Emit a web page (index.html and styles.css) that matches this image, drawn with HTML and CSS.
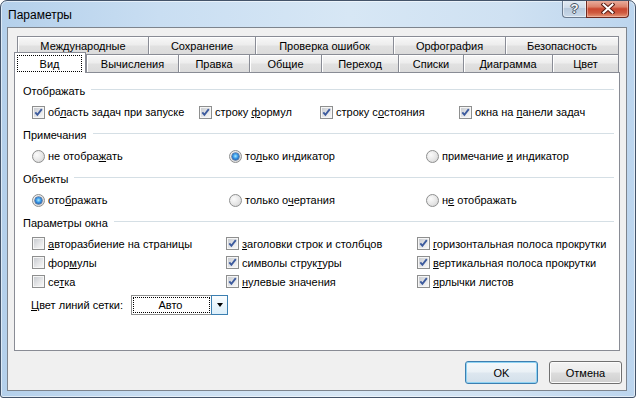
FILE: index.html
```html
<!DOCTYPE html>
<html lang="ru">
<head>
<meta charset="utf-8">
<title>Параметры</title>
<link rel="stylesheet" href="styles.css">
</head>
<body>
<div class="window">
  <div class="titlebar">
    <span class="title">Параметры</span>
    <div class="caption">
      <span class="cap-help">?</span>
      <span class="cap-close"><svg width="14" height="11" viewBox="0 0 14 11"><path d="M2.5 1.5 L11.5 9.5 M11.5 1.5 L2.5 9.5" stroke="#5a1e15" stroke-width="4" stroke-linecap="square" fill="none"/><path d="M2.5 1.5 L11.5 9.5 M11.5 1.5 L2.5 9.5" stroke="#ffffff" stroke-width="2" stroke-linecap="square" fill="none"/></svg></span>
    </div>
  </div>
  <div class="client">
    <div class="tabctl">
      <div class="tabrow row1">
        <div class="tab t-intl">Международные</div>
        <div class="tab t-save">Сохранение</div>
        <div class="tab t-check">Проверка ошибок</div>
        <div class="tab t-spell">Орфография</div>
        <div class="tab t-sec">Безопасность</div>
      </div>
      <div class="tabrow row2">
        <div class="tab sel t-view"><span class="focus">Вид</span></div>
        <div class="tab t-calc">Вычисления</div>
        <div class="tab t-edit">Правка</div>
        <div class="tab t-gen">Общие</div>
        <div class="tab t-trans">Переход</div>
        <div class="tab t-lists">Списки</div>
        <div class="tab t-chart">Диаграмма</div>
        <div class="tab t-color">Цвет</div>
      </div>
      <div class="panel">
        <div class="group-h"><span>Отображать</span></div>
        <div class="opts opts-show">
          <div class="opt"><span class="cb"><svg viewBox="0 0 9 9"><path d="M1.3 4.3 L3.4 6.8 L7.8 1.2" stroke="#3d5b9e" stroke-width="1.9" fill="none"/></svg></span><span>об<u>л</u>асть задач при запуске</span></div>
          <div class="opt"><span class="cb"><svg viewBox="0 0 9 9"><path d="M1.3 4.3 L3.4 6.8 L7.8 1.2" stroke="#3d5b9e" stroke-width="1.9" fill="none"/></svg></span><span>строку <u>ф</u>ормул</span></div>
          <div class="opt"><span class="cb"><svg viewBox="0 0 9 9"><path d="M1.3 4.3 L3.4 6.8 L7.8 1.2" stroke="#3d5b9e" stroke-width="1.9" fill="none"/></svg></span><span>строку с<u>о</u>стояния</span></div>
          <div class="opt"><span class="cb"><svg viewBox="0 0 9 9"><path d="M1.3 4.3 L3.4 6.8 L7.8 1.2" stroke="#3d5b9e" stroke-width="1.9" fill="none"/></svg></span><span>окна на <u>п</u>анели задач</span></div>
        </div>
        <div class="group-h"><span>Примечания</span></div>
        <div class="opts opts-radio">
          <div class="opt"><span class="rb"></span><span>не отобра<u>ж</u>ать</span></div>
          <div class="opt"><span class="rb on"></span><span>то<u>л</u>ько индикатор</span></div>
          <div class="opt"><span class="rb"></span><span>примечание <u>и</u> индикатор</span></div>
        </div>
        <div class="group-h"><span>Объекты</span></div>
        <div class="opts opts-radio">
          <div class="opt"><span class="rb on"></span><span>ото<u>б</u>ражать</span></div>
          <div class="opt"><span class="rb"></span><span>только о<u>ч</u>ертания</span></div>
          <div class="opt"><span class="rb"></span><span>н<u>е</u> отображать</span></div>
        </div>
        <div class="group-h"><span>Параметры окна</span></div>
        <div class="opts opts-win">
          <div class="opt"><span class="cb"><svg viewBox="0 0 9 9"></svg></span><span><u>а</u>вторазбиение на страницы</span></div>
          <div class="opt"><span class="cb"><svg viewBox="0 0 9 9"><path d="M1.3 4.3 L3.4 6.8 L7.8 1.2" stroke="#3d5b9e" stroke-width="1.9" fill="none"/></svg></span><span><u>з</u>аголовки строк и столбцов</span></div>
          <div class="opt"><span class="cb"><svg viewBox="0 0 9 9"><path d="M1.3 4.3 L3.4 6.8 L7.8 1.2" stroke="#3d5b9e" stroke-width="1.9" fill="none"/></svg></span><span><u>г</u>оризонтальная полоса прокрутки</span></div>
          <div class="opt"><span class="cb"><svg viewBox="0 0 9 9"></svg></span><span>фор<u>м</u>улы</span></div>
          <div class="opt"><span class="cb"><svg viewBox="0 0 9 9"><path d="M1.3 4.3 L3.4 6.8 L7.8 1.2" stroke="#3d5b9e" stroke-width="1.9" fill="none"/></svg></span><span>символы струк<u>т</u>уры</span></div>
          <div class="opt"><span class="cb"><svg viewBox="0 0 9 9"><path d="M1.3 4.3 L3.4 6.8 L7.8 1.2" stroke="#3d5b9e" stroke-width="1.9" fill="none"/></svg></span><span><u>в</u>ертикальная полоса прокрутки</span></div>
          <div class="opt"><span class="cb"><svg viewBox="0 0 9 9"></svg></span><span>се<u>т</u>ка</span></div>
          <div class="opt"><span class="cb"><svg viewBox="0 0 9 9"><path d="M1.3 4.3 L3.4 6.8 L7.8 1.2" stroke="#3d5b9e" stroke-width="1.9" fill="none"/></svg></span><span><u>н</u>улевые значения</span></div>
          <div class="opt"><span class="cb"><svg viewBox="0 0 9 9"><path d="M1.3 4.3 L3.4 6.8 L7.8 1.2" stroke="#3d5b9e" stroke-width="1.9" fill="none"/></svg></span><span><u>я</u>рлычки листов</span></div>
        </div>
        <div class="gridcolor">
          <span class="gc-label"><u>Ц</u>вет линий сетки:</span>
          <div class="combo">
            <span class="field">Авто</span>
            <span class="drop"><i class="arrow"></i></span>
          </div>
        </div>
      </div>
    </div>
    <div class="actions">
      <button class="btn default">OK</button>
      <button class="btn">Отмена</button>
    </div>
  </div>
</div>
</body>
</html>
```
FILE: styles.css
```css
html, body {
  margin: 0;
  padding: 0;
  background: #ffffff;
}

body {
  font-family: "Liberation Sans", Arial, sans-serif;
  font-size: 11px;
  color: #000;
}

u {
  text-decoration: underline;
  text-underline-offset: 1px;
}

.window {
  width: 636px;
  height: 398px;
  box-sizing: border-box;
  border: 1px solid #44546a;
  border-radius: 7px 7px 3px 3px;
  background: linear-gradient(90deg, #b4d0eb 0%, #c9def2 25%, #d7e7f5 55%, #cfe1f2 80%, #bcd5ee 100%);
  box-shadow: inset 0 0 0 1px rgba(255, 255, 255, 0.55);
  padding: 0 8px 6px 6px;
  display: flex;
  flex-direction: column;
  overflow: hidden;
}

.titlebar {
  height: 26px;
  display: flex;
  align-items: flex-start;
  flex: none;
}

.title {
  padding: 7px 0 0 1px;
  font-size: 12px;
  line-height: 14px;
}

.caption {
  margin: -1px -2px 0 auto;
  display: flex;
  height: 18px;
}

.cap-help {
  width: 24px;
  box-sizing: border-box;
  border: 1px solid #6a7a8e;
  border-top: none;
  border-right: none;
  border-radius: 0 0 0 4px;
  background: linear-gradient(#e4ecf4, #d0dcea 45%, #b8c9dc 50%, #c9d9e9 100%);
  box-shadow: inset 0 0 0 1px rgba(255, 255, 255, 0.5);
  display: flex;
  align-items: center;
  justify-content: center;
  font-size: 13px;
  font-weight: bold;
  color: #f4f6f8;
  text-shadow: 0 0 1px #33404f, 1px 0 0 #4d5a6a, -1px 0 0 #4d5a6a, 0 1px 0 #4d5a6a, 0 -1px 0 #4d5a6a;
}

.cap-close {
  width: 43px;
  box-sizing: border-box;
  border: 1px solid #6e2a20;
  border-top: none;
  border-radius: 0 0 4px 0;
  background: linear-gradient(#eab3a4, #dc826b 40%, #c9472f 52%, #cf5a40 75%, #e49677 100%);
  box-shadow: inset 0 0 0 1px rgba(255, 210, 200, 0.45);
  display: flex;
  align-items: center;
  justify-content: center;
}

.cap-close svg {
  display: block;
}

.client {
  flex: none;
  height: 364px;
  box-sizing: border-box;
  border: 1px solid #7d848d;
  background: #f0f0f0;
  display: flex;
  flex-direction: column;
}

.tabctl {
  margin: 0 6px;
  padding-top: 8px;
}

.tabrow {
  display: flex;
  align-items: flex-end;
}

.row1 {
  margin-left: 3px;
  height: 18px;
}

.row2 {
  margin-top: -2px;
  height: 20px;
}

.tab {
  box-sizing: border-box;
  height: 18px;
  border: 1px solid #898c95;
  border-bottom: none;
  background: linear-gradient(#f8f8f8 0%, #ededed 45%, #e1e1e1 55%, #dbdbdb 100%);
  box-shadow: inset 1px 1px 0 #ffffff;
  margin-left: -1px;
  display: flex;
  align-items: center;
  justify-content: center;
  padding-top: 1px;
  white-space: nowrap;
}

.row1 .tab:first-child {
  margin-left: 0;
}

.t-intl { width: 132px; }
.t-save { width: 108px; }
.t-check { width: 139px; }
.t-spell { width: 113px; }
.t-sec { width: 114px; }

.t-view { width: 72px; }
.t-calc { width: 93px; margin-left: 0; }
.t-edit { width: 72px; }
.t-gen { width: 73px; }
.t-trans { width: 78px; }
.t-lists { width: 66px; }
.t-chart { width: 90px; }
.t-color { width: 67px; }

.tab.sel {
  height: 21px;
  margin-left: 0;
  margin-bottom: -1px;
  background: #ffffff;
  box-shadow: none;
  position: relative;
  z-index: 1;
  align-items: flex-start;
  justify-content: flex-start;
  padding: 2px 3px 0 2px;
}

.focus {
  flex: 1;
  height: 17px;
  box-sizing: border-box;
  border: 1px dotted #000;
  display: flex;
  align-items: center;
  justify-content: center;
}

.panel {
  height: 279px;
  box-sizing: border-box;
  border: 1px solid #898c95;
  background: #ffffff;
  padding: 6px 5px 0 8px;
}

.group-h {
  height: 22px;
  display: flex;
  align-items: center;
  gap: 6px;
}

.group-h span {
  padding-top: 1px;
}

.group-h::after {
  content: "";
  flex: 1;
  height: 1px;
  background: #d5dfe5;
  margin-top: -1px;
}

.opts {
  display: grid;
  align-items: center;
  padding-left: 9px;
  height: 22px;
}

.opts-show {
  grid-template-columns: 167px 121px 139px auto;
}

.opts-radio {
  grid-template-columns: 197px 197px auto;
}

.opts-win {
  height: auto;
  padding-top: 1px;
  grid-template-columns: 194px 191px auto;
  grid-auto-rows: 19px;
}

.opt {
  display: flex;
  align-items: center;
  gap: 3px;
  white-space: nowrap;
}

.cb {
  flex: none;
  width: 13px;
  height: 13px;
  box-sizing: border-box;
  border: 1px solid #8e8f8f;
  background: #f6f6f6;
  padding: 1px;
}

.cb svg {
  display: block;
  width: 9px;
  height: 9px;
  background: linear-gradient(135deg, #c9ccd1 0%, #e4e5e7 55%, #f7f7f7 100%);
}

.rb {
  flex: none;
  width: 13px;
  height: 13px;
  box-sizing: border-box;
  border-radius: 50%;
  border: 1px solid #8e8f8f;
  background: radial-gradient(circle at 35% 35%, #fbfbfb 0%, #e6e6e6 55%, #cdcdcd 100%);
  display: flex;
  align-items: center;
  justify-content: center;
}

.rb.on::before {
  content: "";
  width: 7px;
  height: 7px;
  border-radius: 50%;
  background: radial-gradient(circle at 50% 45%, #a6ecff 0%, #3a97e6 45%, #0f4c9c 85%);
  box-shadow: 0 0 0 0.5px #1b3d72;
}

.gridcolor {
  height: 26px;
  display: flex;
  align-items: center;
  padding-left: 8px;
  margin-top: 1px;
}

.gc-label {
  width: 100px;
  white-space: nowrap;
}

.combo {
  display: flex;
  width: 97px;
  height: 20px;
  box-sizing: border-box;
  border: 1px solid #8e8f8f;
  background: #ffffff;
}

.combo .field {
  flex: 1;
  margin: 1px;
  border: 1px dotted #000;
  display: flex;
  align-items: center;
  justify-content: center;
  padding-right: 2px;
}

.combo .drop {
  width: 17px;
  margin: -1px -1px -1px 0;
  box-sizing: border-box;
  border: 1px solid #3c7fb1;
  background: linear-gradient(#fbfdfe, #eaf5fc 50%, #dcefFA 100%);
  display: flex;
  align-items: center;
  justify-content: center;
}

.arrow {
  width: 0;
  height: 0;
  border-left: 3.5px solid transparent;
  border-right: 3.5px solid transparent;
  border-top: 4px solid #000;
}

.actions {
  display: flex;
  justify-content: flex-end;
  gap: 11px;
  margin-top: 10px;
  padding-right: 4px;
}

.btn {
  width: 73px;
  height: 23px;
  box-sizing: border-box;
  font-family: inherit;
  font-size: 11px;
  color: #000;
  border: 1px solid #707070;
  border-radius: 3px;
  background: linear-gradient(#f3f3f3 0%, #ebebeb 48%, #dddddd 52%, #cfcfcf 100%);
  box-shadow: inset 0 0 0 1px #fbfbfb;
  padding: 0;
}

.btn.default {
  border-color: #3c7fb1;
  background: linear-gradient(#f4f8fb 0%, #eaf1f6 48%, #dde7ef 52%, #d3e0ea 100%);
  box-shadow: inset 0 0 0 1px #8fd3f3;
}
```
